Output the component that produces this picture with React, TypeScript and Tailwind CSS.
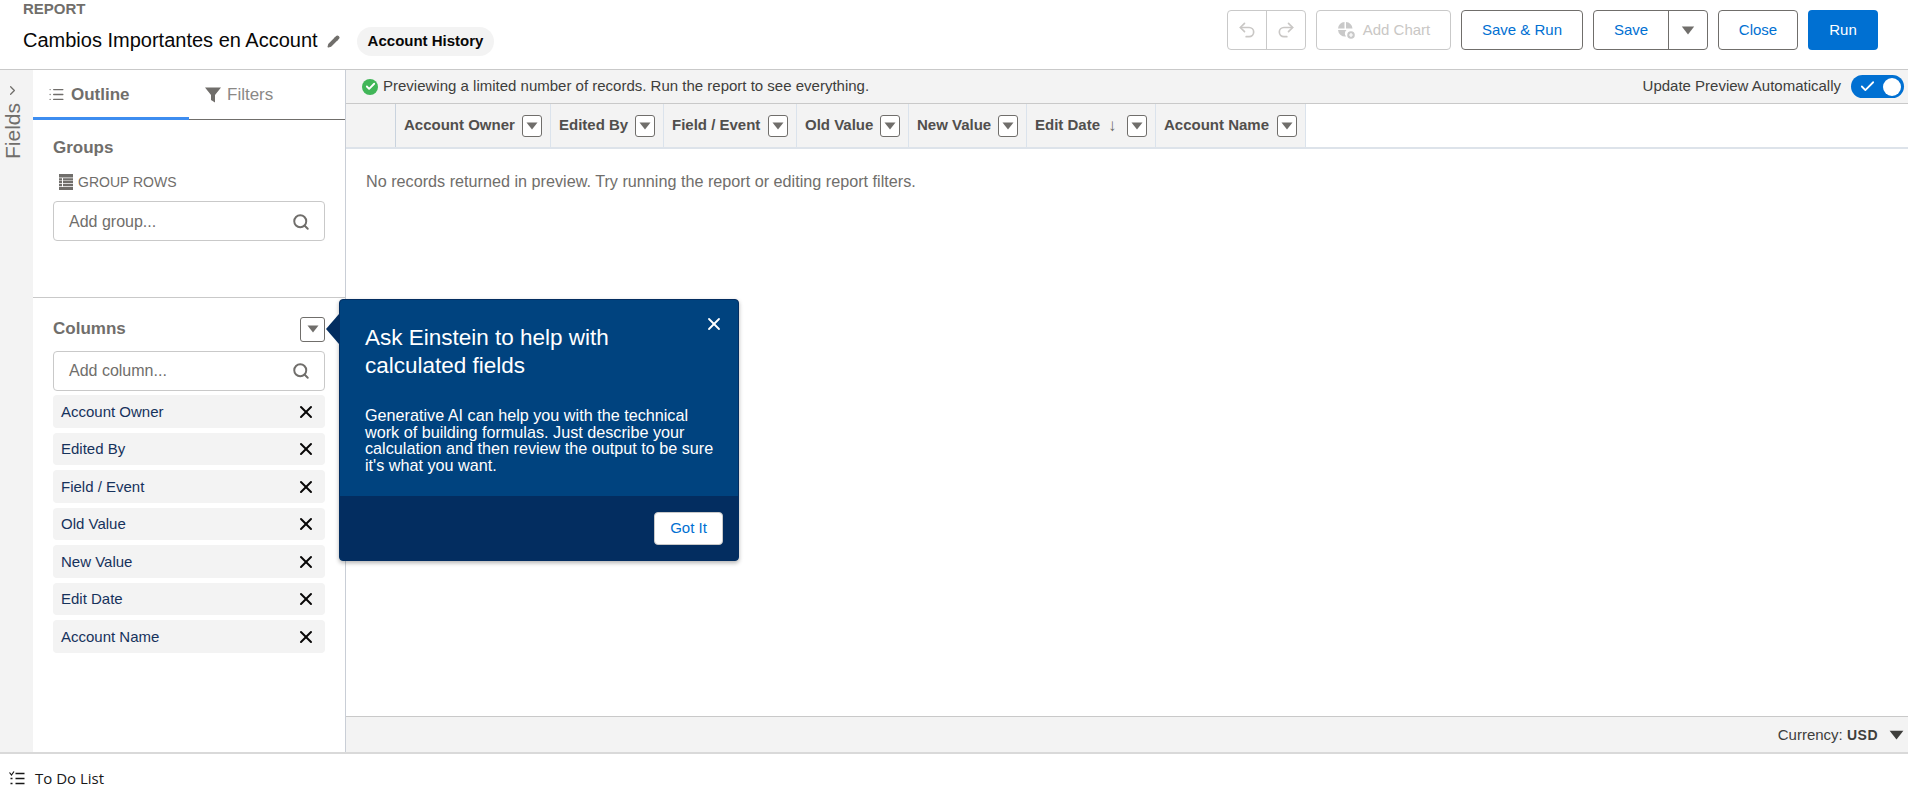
import { Check, ChevronRight, List, Pencil, Redo2, Search, Undo2, X } from 'lucide-react';

const headers = [
  { label: 'Account Owner', width: 'w-[155px]' },
  { label: 'Edited By', width: 'w-[113px]' },
  { label: 'Field / Event', width: 'w-[133px]' },
  { label: 'Old Value', width: 'w-[112px]' },
  { label: 'New Value', width: 'w-[118px]' },
  { label: 'Edit Date', width: 'w-[129px]', sorted: true },
  { label: 'Account Name', width: 'w-[150px]' },
];

const columns = ['Account Owner', 'Edited By', 'Field / Event', 'Old Value', 'New Value', 'Edit Date', 'Account Name'];

function Caret({ className }: { className: string }) {
  return (
    <svg viewBox="0 0 12 8" className={className} fill="currentColor">
      <path d="M0.5 0.5h11L6 7.5z" />
    </svg>
  );
}

function MenuButton({ className }: { className: string }) {
  return (
    <span className={`flex shrink-0 items-center justify-center rounded-[3px] border border-[#706e6b] bg-white text-[#706e6b] ${className}`}>
      <Caret className="h-[8px] w-[12px]" />
    </span>
  );
}

function PieIcon() {
  return (
    <svg viewBox="0 0 18 18" className="h-[18px] w-[18px]" fill="#c9c9c9">
      <path d="M7.5 1a7 7 0 0 0-6.500 6.500h6.500z" />
      <path d="M9 1a7 7 0 0 1 6.500 6.500h-6.500z" />
      <path d="M1 9a7 7 0 0 0 8 6.500 5 5 0 0 1 .5-6.500z" />
      <circle cx="14" cy="14" r="3.800" />
      <path d="M13.400 12h1.200v1.400h1.400v1.200h-1.400v1.400h-1.200v-1.400h-1.400v-1.200h1.400z" fill="#fff" />
    </svg>
  );
}

function FunnelIcon() {
  return (
    <svg viewBox="0 0 18 18" className="h-[18px] w-[18px]" fill="#706e6b">
      <path d="M1 1.500h16L11 9v7.500L7 14V9z" />
    </svg>
  );
}

function RowsIcon() {
  return (
    <svg viewBox="0 0 16 16" className="h-[16px] w-[16px]" fill="#706e6b">
      <path d="M1 0h14v3.500H1zM1 4.200h3v2.200H1zM5 4.200h10v2.200H5zM1 7.100h3v2.200H1zM5 7.100h10v2.200H5zM1 10h3v2.200H1zM5 10h10v2.200H5zM1 12.900h14V16H1z" />
    </svg>
  );
}

function TodoIcon() {
  return (
    <svg viewBox="0 0 16 14" className="h-[14px] w-[16px]" fill="none" stroke="#181818">
      <path d="M0.500 1.500 2.500 4 5 0.500" strokeWidth="1.200" />
      <path d="M6.500 2.500h9M6.500 7.500h9M6.500 12.500h9" strokeWidth="1.600" />
      <path d="M1.500 7.500h2M1.500 12.500h2" strokeWidth="1.600" />
    </svg>
  );
}

export default function App() {
  return (
    <div className="relative flex h-screen flex-col overflow-hidden bg-white font-['Liberation_Sans',Arial,sans-serif]">
      <header className="flex h-[70px] shrink-0 items-start justify-between border-b border-[#c9c9c9] pr-[30px]">
        <div className="pl-[23px]">
          <div className="mt-[1px] text-[15px] leading-[16px] font-bold text-[#706e6b]">REPORT</div>
          <div className="mt-[9px] flex items-center">
            <span className="pb-[2px] text-[20px] leading-[28px] text-[#080707]">Cambios Importantes en Account</span>
            <Pencil className="ml-[9px] h-[13px] w-[13px] fill-[#706e6b] text-[#706e6b]" />
            <span className="ml-[17px] flex h-[29px] items-center rounded-full bg-[#f3f3f3] px-[11px] text-[15px] font-bold text-[#080707]">
              Account History
            </span>
          </div>
        </div>
        <div className="mt-[10px] flex h-[40px] gap-[10px] text-[15px] text-[#0070d2]">
          <div className="flex w-[79px] rounded-[4px] border border-[#c9c9c9] text-[#c9c7c5]">
            <span className="flex flex-1 items-center justify-center border-r border-[#c9c9c9]">
              <Undo2 className="h-[20px] w-[20px]" strokeWidth={2} />
            </span>
            <span className="flex flex-1 items-center justify-center">
              <Redo2 className="h-[20px] w-[20px]" strokeWidth={2} />
            </span>
          </div>
          <span className="flex w-[135px] items-center justify-center gap-[8px] rounded-[4px] border border-[#c9c9c9] text-[#c9c7c5]">
            <PieIcon />
            Add Chart
          </span>
          <span className="flex w-[122px] items-center justify-center rounded-[4px] border border-[#706e6b]">Save &amp; Run</span>
          <div className="flex w-[115px] rounded-[4px] border border-[#706e6b]">
            <span className="flex w-[75px] items-center justify-center border-r border-[#706e6b]">Save</span>
            <span className="flex flex-1 items-center justify-center text-[#706e6b]">
              <Caret className="h-[9px] w-[14px]" />
            </span>
          </div>
          <span className="flex w-[80px] items-center justify-center rounded-[4px] border border-[#706e6b]">Close</span>
          <span className="flex w-[70px] items-center justify-center rounded-[4px] bg-[#0070d2] text-white">Run</span>
        </div>
      </header>

      <div className="flex min-h-0 flex-1">
        <aside className="flex w-[33px] shrink-0 flex-col items-start bg-[#f3f3f3] pt-[13px] pl-[2px] text-[#706e6b]">
          <ChevronRight className="ml-[3px] h-[15px] w-[15px]" />
          <span className="mt-[5px] text-[21px] leading-[22px] [writing-mode:vertical-rl] rotate-180">Fields</span>
        </aside>

        <section className="flex w-[313px] shrink-0 flex-col border-r border-[#c9ced6]">
          <div className="flex h-[50px] shrink-0 border-b border-[#706e6b] text-[17px]">
            <div className="-mb-[1px] flex w-[156px] items-center gap-[6px] border-b-[3px] border-[#3d8df0] pt-[2px] pl-[15px] font-bold text-[#706e6b]">
              <List className="h-[17px] w-[17px]" strokeWidth={1.800} />
              Outline
            </div>
            <div className="flex flex-1 items-center gap-[5px] pl-[15px] text-[#8a8886]">
              <FunnelIcon />
              Filters
            </div>
          </div>

          <div className="h-[178px] shrink-0 border-b border-[#c9c9c9] px-[20px]">
            <h2 className="mt-[17px] text-[17px] leading-[22px] font-bold text-[#706e6b]">Groups</h2>
            <div className="mt-[15px] flex items-center gap-[4px] pl-[5px] text-[14px] leading-[16px] text-[#706e6b]">
              <RowsIcon />
              GROUP ROWS
            </div>
            <div className="mt-[11px] flex h-[40px] items-center justify-between rounded-[4px] border border-[#c9c9c9] pt-[1px] pr-[14px] pl-[15px] text-[16px] text-[#706e6b]">
              Add group...
              <Search className="h-[18px] w-[18px]" strokeWidth={2.600} />
            </div>
          </div>

          <div className="px-[20px]">
            <div className="mt-[18px] flex h-[26px] items-center justify-between">
              <h2 className="text-[17px] font-bold text-[#706e6b]">Columns</h2>
              <MenuButton className="h-[25px] w-[25px]" />
            </div>
            <div className="mt-[9px] flex h-[40px] items-center justify-between rounded-[4px] border border-[#c9c9c9] pr-[14px] pl-[15px] text-[16px] text-[#706e6b]">
              Add column...
              <Search className="h-[18px] w-[18px]" strokeWidth={2.600} />
            </div>
            <ul className="mt-[4px] flex flex-col gap-[5px]">
              {columns.map((name) => (
                <li key={name} className="flex h-[32.500px] items-center justify-between rounded-[4px] bg-[#f3f3f3] pt-[1px] pr-[9px] pl-[8px] text-[15px] text-[#16325c]">
                  {name}
                  <X className="h-[20px] w-[20px] text-[#080707]" strokeWidth={2.400} />
                </li>
              ))}
            </ul>
          </div>
        </section>

        <main className="flex min-w-0 flex-1 flex-col">
          <div className="flex h-[34px] shrink-0 items-center justify-between border-b border-[#c9c9c9] bg-[#f3f3f3] pr-[4px] pl-[16px] text-[15px] text-[#3e3e3c]">
            <div className="flex items-center gap-[5px]">
              <span className="flex h-[16px] w-[16px] items-center justify-center rounded-full bg-[#41b658]">
                <Check className="h-[11px] w-[11px] text-white" strokeWidth={4} />
              </span>
              Previewing a limited number of records. Run the report to see everything.
            </div>
            <div className="flex items-center gap-[10px]">
              Update Preview Automatically
              <span className="flex h-[23px] w-[53px] items-center justify-between rounded-full bg-[#0070d2] pr-[3px] pl-[8px]">
                <Check className="h-[17px] w-[17px] text-white" strokeWidth={2.500} />
                <span className="h-[18px] w-[18px] rounded-full bg-white" />
              </span>
            </div>
          </div>

          <div className="flex h-[45px] shrink-0 border-b-2 border-[#dde3ea]">
            <div className="w-[50px] shrink-0 border-r border-[#c9d3de] bg-[#f3f3f3]" />
            {headers.map((h) => (
              <div key={h.label} className={`flex shrink-0 items-center justify-between border-r border-[#dbe3ec] bg-[#f3f3f3] pr-[8px] pl-[8px] text-[15px] font-bold text-[#514f4d] ${h.width}`}>
                <span className="flex items-center gap-[8px] whitespace-nowrap">
                  {h.label}
                  {h.sorted && <span className="text-[17px] font-normal text-[#706e6b]">↓</span>}
                </span>
                <MenuButton className="h-[22px] w-[20px]" />
              </div>
            ))}
          </div>

          <p className="mt-[23px] flex-1 pl-[20px] text-[16.200px] leading-[18px] text-[#706e6b]">
            No records returned in preview. Try running the report or editing report filters.
          </p>

          <div className="flex h-[36px] shrink-0 items-center justify-end border-t border-[#c9c9c9] bg-[#f3f3f3] pt-[1px] pr-[4px] text-[15px] text-[#3e3e3c]">
            Currency:&nbsp;<b className="text-[14px] tracking-[0.500px]">USD</b>
            <Caret className="ml-[11px] h-[10px] w-[15px]" />
          </div>
        </main>
      </div>

      <footer className="flex h-[43px] shrink-0 items-center gap-[10px] border-t-2 border-[#d9d9d9] pt-[7px] pl-[9px] font-['Open_Sans',sans-serif] text-[15px] text-[#181818]">
        <TodoIcon />
        To Do List
      </footer>

      <div className="absolute top-[299px] left-[339px] flex h-[262px] w-[400px] flex-col rounded-[4px] border border-[#032d60] bg-[#00437f] text-white shadow-[0_2px_4px_rgba(0,0,0,0.3)]">
        <span className="absolute top-[14px] -left-[14px] h-0 w-0 border-y-[15px] border-r-[13px] border-y-transparent border-r-[#032d60]" />
        <X className="absolute top-[14px] right-[14px] h-[20px] w-[20px]" strokeWidth={2.200} />
        <div className="flex-1 pt-[24px] pr-[21px] pl-[25px]">
          <h3 className="w-[320px] text-[22.500px] leading-[28px]">Ask Einstein to help with calculated fields</h3>
          <p className="mt-[27px] text-[16.200px] leading-[16.500px]">
            Generative AI can help you with the technical work of building formulas. Just describe your calculation and then review the output to be sure it's what you want.
          </p>
        </div>
        <div className="flex h-[64px] shrink-0 items-center justify-end rounded-b-[3px] bg-[#032d60] pr-[15px]">
          <span className="flex h-[33px] w-[69px] items-center justify-center rounded-[4px] border border-[#c9c9c9] bg-white text-[15px] text-[#0070d2]">Got It</span>
        </div>
      </div>
    </div>
  );
}
